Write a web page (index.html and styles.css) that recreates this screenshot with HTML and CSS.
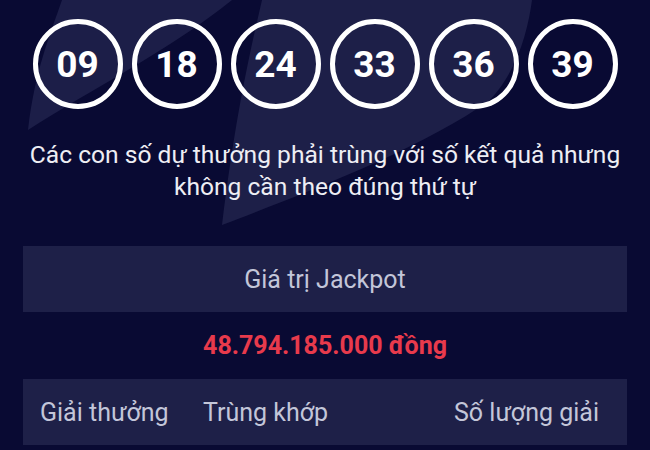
FILE: index.html
```html
<!DOCTYPE html>
<html lang="vi">
<head>
<meta charset="utf-8">
<title>Kết quả</title>
<link rel="stylesheet" href="styles.css">
</head>
<body>
<div class="page">
  <svg class="bg" width="650" height="450" viewBox="0 0 650 450" aria-hidden="true">
    <path class="swoosh" d="M62 0 C 50 35, 35 70, 28 130 C 90 90, 170 50, 232 0 Z"/>
    <path class="blob" d="M262 0 C 248 60, 235 120, 222 225 C 300 195, 420 150, 490 100 C 518 70, 528 30, 532 0 Z"/>
  </svg>
  <div class="balls">
    <div class="ball">09</div>
    <div class="ball">18</div>
    <div class="ball">24</div>
    <div class="ball">33</div>
    <div class="ball">36</div>
    <div class="ball">39</div>
  </div>
  <p class="note">Các con số dự thưởng phải trùng với số kết quả nhưng<br>không cần theo đúng thứ tự</p>
  <div class="panel jackpot">Giá trị Jackpot</div>
  <div class="amount">48.794.185.000 đồng</div>
  <div class="panel head">
    <span class="c1">Giải thưởng</span>
    <span class="c2">Trùng khớp</span>
    <span class="c3">Số lượng giải</span>
  </div>
</div>
</body>
</html>
```

FILE: styles.css
```css
* { box-sizing: border-box; }
html, body { margin: 0; padding: 0; }
body {
  background: #090a33;
  font-family: Roboto, "Noto Sans", sans-serif;
  width: 650px;
  height: 450px;
  overflow: hidden;
}
.page {
  position: relative;
  width: 650px;
  height: 450px;
  overflow: hidden;
  display: flex;
  flex-direction: column;
}
.bg {
  position: absolute;
  left: 0;
  top: 0;
  z-index: 0;
}
.swoosh { fill: #1c1e48; }
.blob { fill: #1d1f48; }
.balls, .note, .panel, .amount { position: relative; z-index: 1; }
.balls {
  display: flex;
  justify-content: center;
  gap: 9px;
  padding-top: 19px;
}
.ball {
  width: 90px;
  height: 90px;
  border: 5px solid #ffffff;
  border-radius: 50%;
  display: flex;
  align-items: center;
  justify-content: center;
  color: #ffffff;
  font-weight: 700;
  font-size: 37px;
}
.note {
  margin: 30px 0 0;
  text-align: center;
  color: #eeeef4;
  font-size: 24.6px;
  line-height: 32px;
}
.panel {
  margin: 43px 23px 0;
  height: 66px;
  background: #1e2048;
  color: #c3c6d9;
  font-size: 25px;
}
.jackpot {
  display: flex;
  align-items: center;
  justify-content: center;
}
.amount {
  height: 67px;
  display: flex;
  align-items: center;
  justify-content: center;
  color: #e83a4c;
  font-weight: 700;
  font-size: 25px;
}
.head {
  margin-top: 0;
  display: flex;
  align-items: center;
  padding: 0 28px 0 17px;
}
.c1 { width: 163px; }
.c2 { flex: 1; }
.c3 { text-align: right; }
```
